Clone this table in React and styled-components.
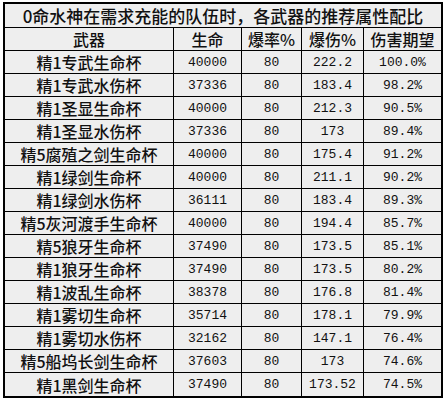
import styled, { createGlobalStyle } from "styled-components"

const Global = createGlobalStyle`
    body {
        margin: 0;
        background: #ffffff;
    }
`

const Page = styled.div`
    padding: 2px 0 0 3px;
`

const Sheet = styled.div`
    width: 436px;
    border: 2px solid #000;
    background: #eeeeee;
    display: grid;
    grid-template-columns: 169px 68px 60px 62px 77px;
    grid-template-rows: 24px;
    grid-auto-rows: 23px;
    color: #111;
`

const Cell = styled.div`
    box-sizing: border-box;
    display: flex;
    align-items: center;
    justify-content: center;
    border-right: ${p => (p.$last ? "none" : "1px solid #000")};
    border-bottom: ${p => (p.$bottom ? "none" : "1px solid #000")};
    font-family: ${p => (p.$num ? '"Liberation Mono", monospace' : '"Noto Sans CJK SC", sans-serif')};
    font-size: ${p => (p.$num ? "13px" : "16px")};
    font-weight: ${p => (p.$num ? 400 : 500)};
    white-space: nowrap;
    overflow: hidden;
`

const Title = styled(Cell)`
    grid-column: 1 / span 5;
    border-right: none;
    font-size: 17px;
`

const headers = ["武器", "生命", "爆率%", "爆伤%", "伤害期望"]

const rows = [
    ["精1专武生命杯", "40000", "80", "222.2", "100.0%"],
    ["精1专武水伤杯", "37336", "80", "183.4", "98.2%"],
    ["精1圣显生命杯", "40000", "80", "212.3", "90.5%"],
    ["精1圣显水伤杯", "37336", "80", "173", "89.4%"],
    ["精5腐殖之剑生命杯", "40000", "80", "175.4", "91.2%"],
    ["精1绿剑生命杯", "40000", "80", "211.1", "90.2%"],
    ["精1绿剑水伤杯", "36111", "80", "183.4", "89.3%"],
    ["精5灰河渡手生命杯", "40000", "80", "194.4", "85.7%"],
    ["精5狼牙生命杯", "37490", "80", "173.5", "85.1%"],
    ["精1狼牙生命杯", "37490", "80", "173.5", "80.2%"],
    ["精1波乱生命杯", "38378", "80", "176.8", "81.4%"],
    ["精1雾切生命杯", "35714", "80", "178.1", "79.9%"],
    ["精1雾切水伤杯", "32162", "80", "147.1", "76.4%"],
    ["精5船坞长剑生命杯", "37603", "80", "173", "74.6%"],
    ["精1黑剑生命杯", "37490", "80", "173.52", "74.5%"],
]

const App = () => {
  return (
    <Page>
        <Global />
        <Sheet>
            <Title>0命水神在需求充能的队伍时，各武器的推荐属性配比</Title>
            {headers.map((h, i) => (
                <Cell key={h} $last={i === 4}>{h}</Cell>
            ))}
            {rows.map((r, ri) => r.map((v, ci) => (
                <Cell
                    key={ri + "-" + ci}
                    $num={ci > 0}
                    $last={ci === 4}
                    $bottom={ri === rows.length - 1}
                >
                    {v}
                </Cell>
            )))}
        </Sheet>
    </Page>
  )
}

export default App
